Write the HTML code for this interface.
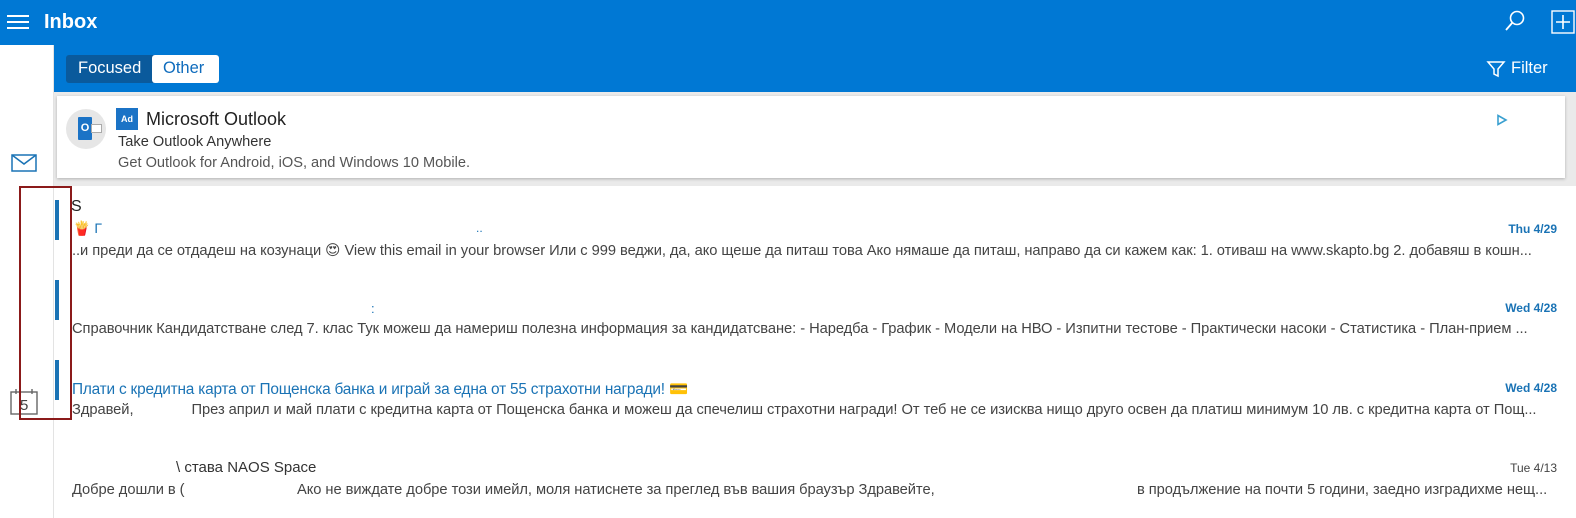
<!DOCTYPE html>
<html><head><meta charset="utf-8"><style>
*{margin:0;padding:0;box-sizing:border-box}
body{width:1576px;height:518px;overflow:hidden;background:#fff;font-family:"Liberation Sans","DejaVu Sans",sans-serif;position:relative;color:#333}
.a{position:absolute;white-space:nowrap;overflow:hidden}
.top{left:0;top:0;width:1576px;height:45px;background:#0078d4}
.sub{left:54px;top:45px;width:1522px;height:47px;background:#0078d4}
.gray{left:54px;top:92px;width:1522px;height:94px;background:#eaeaea}
.card{left:57px;top:96px;width:1508px;height:82px;background:#fff;box-shadow:0 1px 3px rgba(0,0,0,.25)}
.t{font-size:14.7px;color:#444;letter-spacing:-0.05px}
.bar{position:absolute;left:55px;width:4px;background:#1a73b5}
.date{font-size:12px;color:#1a73b5;font-weight:bold;text-align:right}
</style></head><body>
<div class="a top"></div>
<div class="a sub"></div>
<div class="a" style="left:53px;top:45px;width:1px;height:473px;background:#e3e3e3"></div>
<div class="a" style="left:7px;top:15px;width:22px;height:2px;background:#fff"></div>
<div class="a" style="left:7px;top:21px;width:22px;height:2px;background:#fff"></div>
<div class="a" style="left:7px;top:27px;width:22px;height:2px;background:#fff"></div>
<div class="a" style="left:44px;top:11px;color:#fff;font-size:20px;font-weight:bold">Inbox</div>
<svg class="a" style="left:1503px;top:9px" width="24" height="24" viewBox="0 0 24 24"><circle cx="14" cy="9" r="6.5" fill="none" stroke="#fff" stroke-width="1.6"/><path d="M9.5 13.5L3 21" stroke="#fff" stroke-width="1.8"/></svg>
<svg class="a" style="left:1551px;top:10px" width="25" height="24" viewBox="0 0 25 24"><rect x="1" y="1" width="22" height="22" fill="none" stroke="#fff" stroke-width="1.4"/><path d="M12 5v14M5 12h14" stroke="#fff" stroke-width="1.6"/></svg>
<div class="a" style="left:66px;top:55px;width:153px;height:28px;background:#0a5a9c;border-radius:3px"></div>
<div class="a" style="left:78px;top:59px;font-size:16.5px;color:#fff">Focused</div>
<div class="a" style="left:152px;top:55px;width:67px;height:28px;background:#fff;border-radius:3px"></div>
<div class="a" style="left:163px;top:59px;font-size:16.5px;color:#0f6cbd">Other</div>
<svg class="a" style="left:1486px;top:59px" width="20" height="20" viewBox="0 0 20 20"><path d="M2 3h16l-6 7v7l-4-2v-5z" fill="none" stroke="#fff" stroke-width="1.5"/></svg>
<div class="a" style="left:1511px;top:59px;font-size:16.5px;color:#fff">Filter</div>
<div class="a gray"></div>
<div class="a card"></div>
<div class="a" style="left:66px;top:109px;width:40px;height:40px;border-radius:50%;background:#e6e6e6"></div>
<div class="a" style="left:78px;top:117px;width:14px;height:23px;background:#1b73c6;border-radius:1px;color:#fff;font-size:11px;font-weight:bold;line-height:23px;text-align:center">O</div>
<div class="a" style="left:91px;top:124px;width:11px;height:9px;background:#fff;border:1px solid #aaa"></div>
<div class="a" style="left:116px;top:108px;width:22px;height:22px;background:#1b73c6;color:#fff;font-size:9px;font-weight:bold;text-align:center;line-height:22px">Ad</div>
<div class="a" style="left:146px;top:109px;font-size:18px;color:#222">Microsoft Outlook</div>
<div class="a" style="left:118px;top:134px;font-size:14.6px;color:#333">Take Outlook Anywhere</div>
<div class="a" style="left:118px;top:155px;font-size:14.6px;color:#555">Get Outlook for Android, iOS, and Windows 10 Mobile.</div>
<svg class="a" style="left:1496px;top:114px" width="12" height="12" viewBox="0 0 12 12"><path d="M2 1.5l8 4.5-8 4.5z" fill="none" stroke="#3aa0d0" stroke-width="1.6"/></svg>
<svg class="a" style="left:11px;top:154px" width="26" height="18" viewBox="0 0 26 18"><rect x="1" y="1" width="24" height="16" fill="none" stroke="#1a73b5" stroke-width="1.5"/><path d="M1 1l12 9 12-9" fill="none" stroke="#1a73b5" stroke-width="1.5"/></svg>
<svg class="a" style="left:10px;top:388px" width="30" height="30" viewBox="0 0 30 30"><rect x="1" y="4" width="26" height="22" fill="none" stroke="#666" stroke-width="1.4"/><path d="M6 1v5M22 1v5" stroke="#666" stroke-width="1.4"/><text x="10" y="22" font-size="15" fill="#444" font-family="Liberation Sans">5</text></svg>
<div class="a" style="left:19px;top:186px;width:53px;height:234px;border:2px solid #8b1a1a"></div>
<div class="bar" style="top:200px;height:40px"></div>
<div class="bar" style="top:280px;height:40px"></div>
<div class="bar" style="top:360px;height:40px"></div>
<div class="a" style="left:71px;top:198px;font-size:16px;color:#222">S</div>
<div class="a" style="left:73px;top:220px;font-size:14px">🍟 <span style="color:#1a73b5">Г</span></div>
<div class="a" style="left:476px;top:221px;font-size:12px;color:#1a73b5">..</div>
<div class="a date" style="left:1460px;top:222px;width:97px">Thu 4/29</div>
<div class="a t" style="left:72px;top:242px;width:1485px">..и преди да се отдадеш на козунаци 😍 View this email in your browser Или с 999 веджи, да, ако щеше да питаш това Ако нямаше да питаш, направо да си кажем как: 1. отиваш на www.skapto.bg 2. добавяш в кошн...</div>
<div class="a" style="left:371px;top:301px;font-size:13px;color:#1a73b5">:</div>
<div class="a date" style="left:1460px;top:301px;width:97px">Wed 4/28</div>
<div class="a t" style="left:72px;top:321px;width:1485px">Справочник Кандидатстване след 7. клас Тук можеш да намериш полезна информация за кандидатсване: - Наредба - График - Модели на НВО - Изпитни тестове - Практически насоки - Статистика - План-прием ...</div>
<div class="a" style="left:72px;top:380px;font-size:15.4px;color:#1a73b5;letter-spacing:-0.2px">Плати с кредитна карта от Пощенска банка и играй за една от 55 страхотни награди! 💳</div>
<div class="a date" style="left:1460px;top:381px;width:97px">Wed 4/28</div>
<div class="a t" style="left:72px;top:402px;width:1485px">Здравей, <span style="display:inline-block;width:50px"></span> През април и май плати с кредитна карта от Пощенска банка и можеш да спечелиш страхотни награди! От теб не се изисква нищо друго освен да платиш минимум 10 лв. с кредитна карта от Пощ...</div>
<div class="a" style="left:176px;top:459px;font-size:15px;color:#333">\ става NAOS Space</div>
<div class="a" style="left:1460px;top:461px;width:97px;font-size:12px;color:#444;text-align:right">Tue 4/13</div>
<div class="a t" style="left:72px;top:482px">Добре дошли в (</div>
<div class="a t" style="left:297px;top:482px">Ако не виждате добре този имейл, моля натиснете за преглед във вашия браузър Здравейте,</div>
<div class="a t" style="left:1137px;top:482px;width:420px">в продължение на почти 5 години, заедно изградихме нещ...</div>
</body></html>
